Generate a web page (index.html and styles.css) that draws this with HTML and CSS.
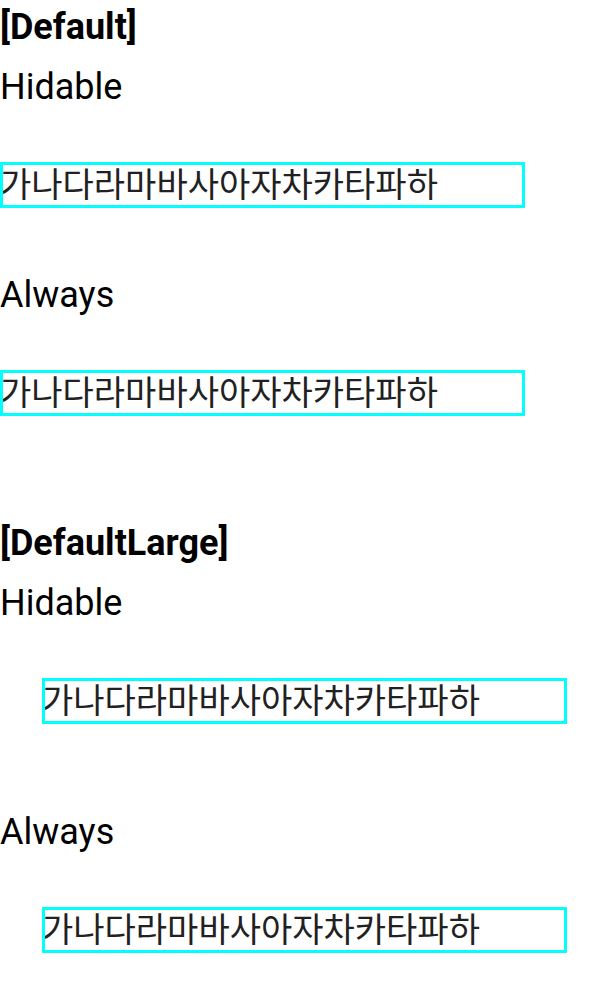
FILE: index.html
```html
<!DOCTYPE html>
<html lang="ko">
<head>
<meta charset="utf-8">
<title>Default and DefaultLarge</title>
<link rel="stylesheet" href="styles.css">
</head>
<body>
<main>
  <section class="group">
    <h1 class="title">[Default]</h1>
    <h2 class="label">Hidable</h2>
    <p class="box">가나다라마바사아자차카타파하</p>
    <h2 class="label">Always</h2>
    <p class="box">가나다라마바사아자차카타파하</p>
  </section>
  <section class="group large">
    <h1 class="title">[DefaultLarge]</h1>
    <h2 class="label">Hidable</h2>
    <p class="box">가나다라마바사아자차카타파하</p>
    <h2 class="label">Always</h2>
    <p class="box">가나다라마바사아자차카타파하</p>
  </section>
</main>
</body>
</html>
```
FILE: styles.css
```css
* {
  box-sizing: border-box;
}

body {
  margin: 0;
  background: #fff;
  color: #000;
  font-family: Roboto, "Noto Sans CJK KR", sans-serif;
  font-size: 36px;
}

.title,
.label {
  margin: 0;
  font-size: 36px;
  line-height: 44px;
}

.title {
  padding-top: 5px;
  font-weight: 700;
}

.label {
  margin-top: 16px;
  font-weight: 400;
}

/* The outline lies inside the box, over the text's first pixels. */
.box {
  margin: 53px 84px 0 0;
  outline: 3px solid #0ff;
  outline-offset: -3px;
  color: #212121;
  font-size: 34px;
  font-weight: 400;
  line-height: 46px;
  white-space: nowrap;
}

.box + .label {
  margin-top: 65px;
}

.group + .group {
  margin-top: 100px;
}

.large .box {
  margin: 53px 42px 0;
}

.large .box + .label {
  margin-top: 86px;
}
```
